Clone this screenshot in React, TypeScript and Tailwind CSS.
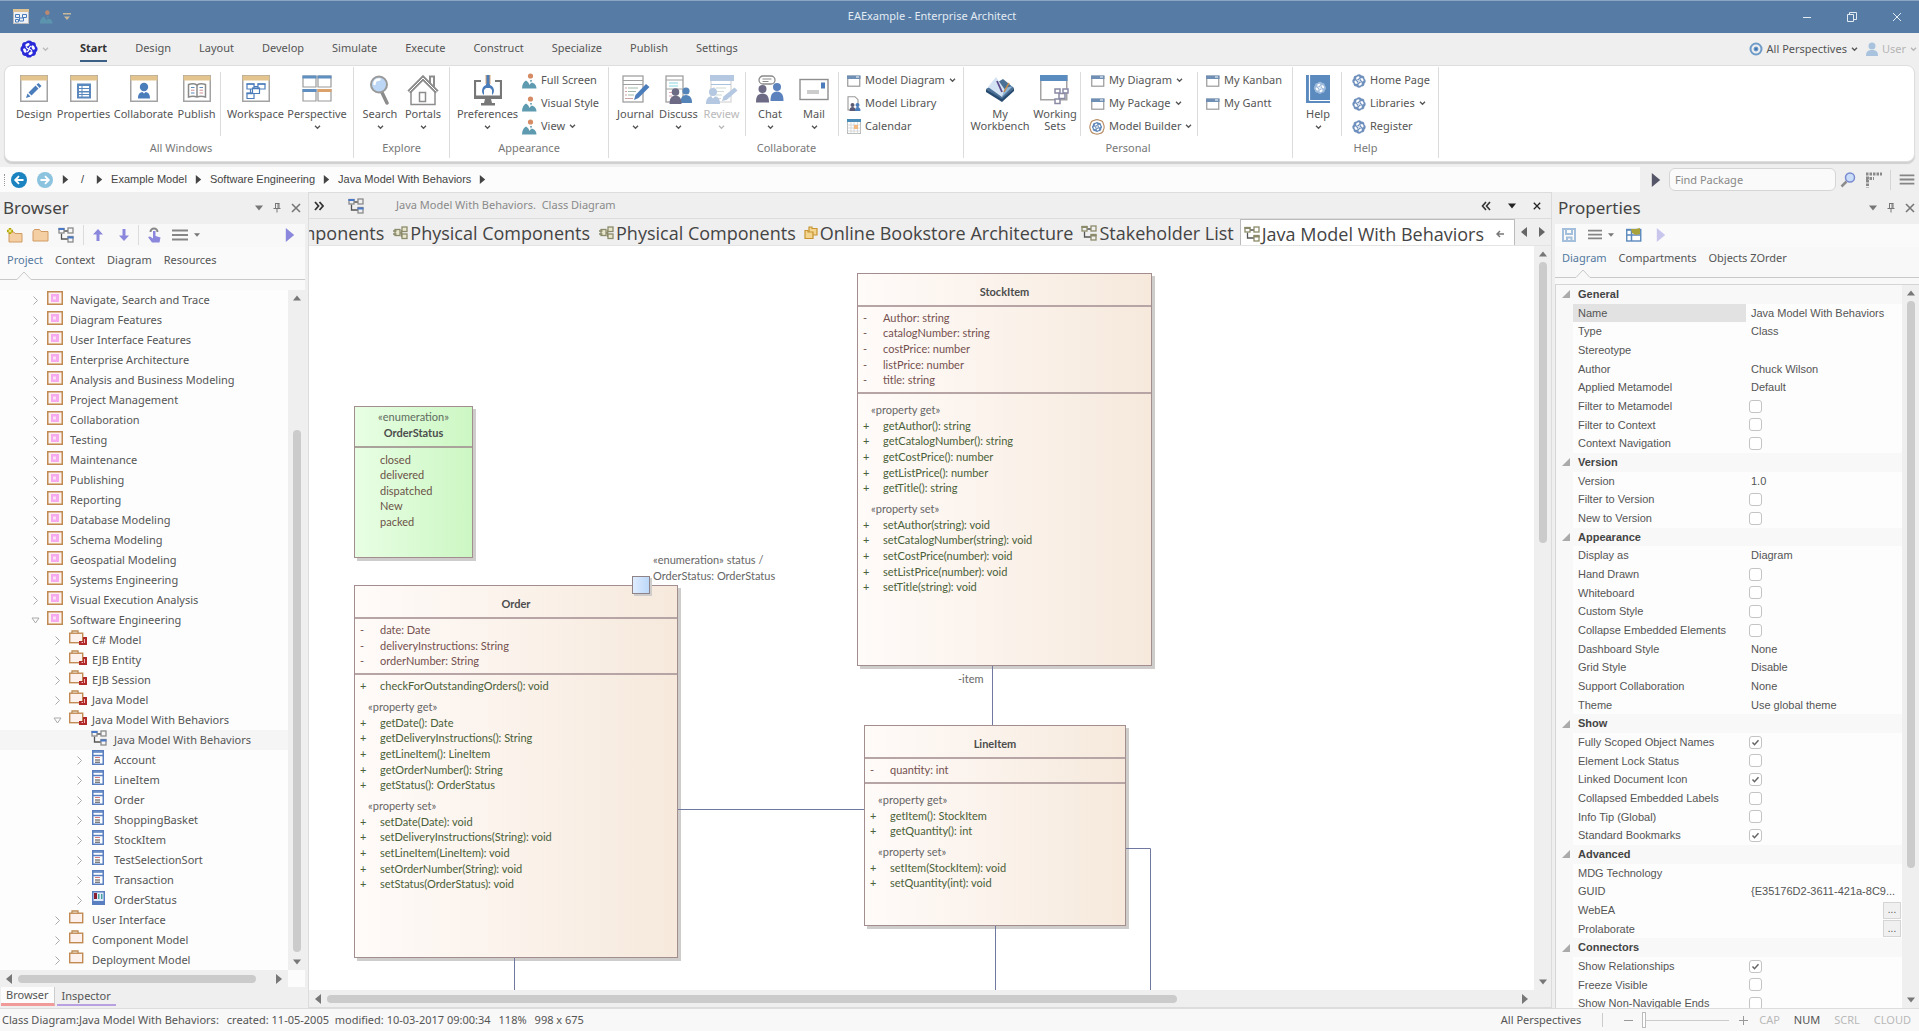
import { Fragment, type ReactNode } from 'react';
import clsx from 'clsx';

/* ---------- shared bits ---------- */

interface IconProps {
  className?: string;
}

const ChevronDown = ({ className }: IconProps) => (
  <svg viewBox="0 0 8 6" className={clsx('h-[5px] w-[7px] shrink-0', className)} fill="none" stroke="currentColor" strokeWidth="1.600">
    <path d="M1 1l3 3 3-3" />
  </svg>
);

type Direction = 'up' | 'down' | 'left' | 'right';

const trianglePaths: Record<Direction, string> = {
  up: 'M0 8l5-6 5 6z',
  down: 'M0 2l5 6 5-6z',
  left: 'M8 0L2 5l6 5z',
  right: 'M2 0l6 5-6 5z',
};

const Triangle = ({ dir, className = 'size-2' }: { dir: Direction; className?: string }) => (
  <svg viewBox="0 0 10 10" className={clsx('shrink-0', className)} fill="currentColor">
    <path d={trianglePaths[dir]} />
  </svg>
);

const MenuLines = ({ className = 'h-3 w-4' }: IconProps) => (
  <svg viewBox="0 0 16 12" className={className} stroke="#858585" strokeWidth="2">
    <path d="M0 1.5h16M0 6h16M0 10.5h16" />
  </svg>
);

const PinIcon = () => (
  <svg viewBox="0 0 10 12" className="h-3 w-2.5" fill="none" stroke="#777" strokeWidth="1">
    <path d="M3 1.500h4.500M3.500 1.500v5M6 1.500v5M7 1.500v5M1.500 6.500h7M5 6.500v4" />
  </svg>
);

const CloseIcon = ({ className = 'size-2.5 text-[#777]' }: IconProps) => (
  <svg viewBox="0 0 10 10" className={className} stroke="currentColor" strokeWidth="1.600">
    <path d="M1 1l8 8M9 1l-8 8" />
  </svg>
);

/* ---------- icons ---------- */

const quarterTurns = [0, 90, 180, 270];

const Knot = ({ color }: { color: string }) => (
  <g>
    <circle cx="8" cy="8" r="5" fill={color} />
    {quarterTurns.map((turn) => (
      <g key={turn} transform={`rotate(${turn} 8 8)`} fill={color}>
        <circle cx="8" cy="3.400" r="3" />
        <circle cx="11.200" cy="4.800" r="3" />
      </g>
    ))}
    {quarterTurns.map((turn) => (
      <g key={turn} transform={`rotate(${turn} 8 8)`}>
        <ellipse cx="6.600" cy="4.300" rx="2.100" ry="1.300" transform="rotate(-30 6.600 4.300)" fill="#fff" />
        <path d="M8 8c0-1.200.8-2 2-2.600" stroke="#fff" fill="none" />
      </g>
    ))}
  </g>
);

const KnotIcon = ({ className, color = '#6f90bd' }: IconProps & { color?: string }) => (
  <svg viewBox="0 0 16 16" className={clsx('shrink-0', className)}>
    <Knot color={color} />
  </svg>
);

const BuilderIcon = () => (
  <svg viewBox="0 0 18 18" className="-ml-0.5 h-[18px] w-4 shrink-0">
    <g fill="#fff" stroke="#b98f68" strokeWidth="1.300">
      <path d="M6 1.500c2-1 4-1 6 0 2.500.3 4 2 4.300 4.500 1 2 1 4 0 6-.3 2.500-1.800 4-4.300 4.300-2 1-4 1-6 0C3.500 16 2 14.500 1.700 12c-1-2-1-4 0-6C2 3.500 3.500 1.800 6 1.500z" />
    </g>
    <g transform="translate(3 3) scale(.75)">
      <Knot color="#5f87b8" />
    </g>
  </svg>
);

const PersonHill = ({ className = 'size-4' }: IconProps) => (
  <svg viewBox="0 0 16 16" className={clsx('shrink-0', className)}>
    <path d="M1 15.500c0-4 1.600-6.500 4-8 2 1 3 3 3.500 4.500 1-1.500 2-2.500 3.500-2 2 .8 3.500 3 3.500 5.500z" fill="#5f9bb0" />
    <circle cx="9.500" cy="3" r="2.600" fill="#d58b63" />
    <path d="M9 7h2l-1 3z" fill="#5f9bb0" />
  </svg>
);

const DiagramIcon = ({ className, color = '#8a8a8a', fill = '#4a78c8' }: IconProps & { color?: string; fill?: string }) => (
  <svg viewBox="0 0 16 16" className={clsx('size-4 shrink-0', className)} fill="none" stroke={color} strokeWidth="1.300">
    <path d="M6 4h4M3.500 6.500V12H10" stroke="#555" />
    <rect x="1" y="1.500" width="5" height="4.500" />
    <rect x="10" y="1" width="5" height="5" />
    <rect x="10" y="9.500" width="5" height="5.500" />
    <path d="M.5 2h6M9.500 10.500h6" stroke={fill} strokeWidth="2" />
  </svg>
);

const ComponentIcon = () => (
  <svg viewBox="0 0 16 14" className="h-3.5 w-4 shrink-0" fill="#e9e8cf" stroke="#8b8a6a" strokeWidth="1.300">
    <path d="M8 7h2.500M9.500 4v7" />
    <rect x="3" y="3.500" width="5" height="6" />
    <path d="M1 5h3.500M1 8h3.500" />
    <rect x="10" y="1" width="5" height="4.500" />
    <rect x="10" y="8" width="5" height="4.500" />
  </svg>
);

const PackagesIcon = () => (
  <svg viewBox="0 0 14 14" className="size-3.5 shrink-0" fill="#f3d58f" stroke="#c79431" strokeWidth="1.200">
    <path d="M5 2.500V1h3v1.500h5V9H5z" />
    <path d="M1 6V4.500h3V6h5v6.500H1z" />
  </svg>
);

const WindowFrame = ({ children }: { children: ReactNode }) => (
  <svg viewBox="0 0 28 27" className="h-[27px] w-7" fill="none">
    <rect x=".75" y=".75" width="26.500" height="25.500" fill="#fff" stroke="#a3a3a3" strokeWidth="1.500" />
    <path d="M.5.5h27v5H.5z" fill="#e3c48f" />
    {children}
  </svg>
);

const DesignIcon = () => (
  <WindowFrame>
    <path d="M6 23l1.500-4.500 3 3z" fill="#4b7dbb" />
    <path d="M8.500 17.500l7-7 3 3-7 7zM16.500 9.500l2-1.500 3 3-2 2z" fill="#4b7dbb" />
  </WindowFrame>
);

const PropertiesIcon = () => (
  <WindowFrame>
    <path d="M7 8.500h14v15H7z" fill="#5b88bd" />
    <path d="M9 11h10v5H9zM9 17.500h10v4H9z" fill="#fff" />
    <path d="M9 13.500h10M9 19.500h10M12 11v11" stroke="#5b88bd" />
  </WindowFrame>
);

const CollaborateIcon = () => (
  <WindowFrame>
    <circle cx="14" cy="12" r="4.200" fill="#4b7dbb" />
    <path d="M8 23.500c0-5 2-6 4.500-6.500l1.500 1.500 1.500-1.500c2.500.5 4.500 1.500 4.500 6.500z" fill="#4b7dbb" />
  </WindowFrame>
);

const PublishIcon = () => (
  <WindowFrame>
    <path d="M5.500 9.500c3-1 6-1 8.500.5 2.500-1.500 5.500-1.500 8.500-.5V22c-3-1-6-1-8.500 0-2.500-1-5.500-1-8.500 0z" stroke="#8a8a8a" strokeWidth="1.500" fill="#fff" />
    <path d="M14 10v12" stroke="#8a8a8a" strokeWidth="1.500" />
    <path d="M8 12.500h3.500M8 18h3.500M16.500 12.500H20" stroke="#5b88bd" />
    <path d="M8 15.200h3.500M16.500 15.200H20M16.500 18H20" stroke="#cf8f8f" />
  </WindowFrame>
);

const WorkspaceIcon = () => (
  <WindowFrame>
    <g stroke="#4b7dbb" strokeWidth="1.200" fill="#fff">
      <path d="M5 9h7v5H5zM16 9h7v5h-7zM5 18h7v5.500H5zM12 11.500h4M8.500 14v4" />
      <path d="M10.500 13h7v5.500h-7z" />
    </g>
    <path d="M4.500 9h8M15.500 9h8M10 13.500h8M4.500 18.500h6" stroke="#4b7dbb" strokeWidth="1.600" />
  </WindowFrame>
);

const PerspectiveIcon = () => (
  <svg viewBox="0 0 30 27" className="h-[27px] w-[30px]" fill="#fff" stroke="#9a9a9a" strokeWidth="1.200">
    <path d="M1 1h13v11H1zM16 1h13v11H16zM1 14.500h13V26H1zM16 14.500h13V26H16z" />
    <path d="M.5 2h14M15.500 2h14M.5 15.500h14" stroke="#5f8fc0" strokeWidth="3" />
    <path d="M15.500 15.500h14" stroke="#dba26d" strokeWidth="3" />
  </svg>
);

const SearchIcon = () => (
  <svg viewBox="0 0 22 30" className="h-[30px] w-[22px]">
    <path d="M13 17.500l5 10.500" stroke="#8c8c8c" strokeWidth="3.500" strokeLinecap="round" />
    <circle cx="10" cy="9.500" r="8" fill="#bcd6f5" stroke="#9a9a9a" strokeWidth="2" />
    <path d="M5.500 9c0-3 2-4.500 5-4.500" stroke="#fff" strokeWidth="2.500" fill="none" strokeLinecap="round" />
  </svg>
);

const PortalsIcon = () => (
  <svg viewBox="0 0 32 31" className="h-[31px] w-8" fill="none" stroke="#8d8d8d">
    <path d="M23 8V1.500h4V12" strokeWidth="2" />
    <path d="M2 17L16 3l14 14" strokeWidth="4.500" />
    <path d="M2.500 16.500L16 3l13.500 13.500" stroke="#fff" strokeWidth="1" />
    <path d="M4 17v12.500h24V17" strokeWidth="1.500" />
    <path d="M12.500 17.500h6v9h-6z" strokeWidth="1.500" />
  </svg>
);

const PreferencesIcon = () => (
  <svg viewBox="0 0 28 31" className="h-[31px] w-7" fill="none">
    <path d="M7 6H1v17h26V6h-6" stroke="#777" strokeWidth="2.200" />
    <path d="M0 20.500h28V24H0z" fill="#777" />
    <path d="M11 24h6l1 4h3v2.500H7V28h3z" fill="#777" />
    <path d="M12 0h4v10c3 1 4 3.500 4 6-.2 2-1 3-2 4v-5l-2-2h-4l-2 2v5c-1.200-1-2-2-2-4 0-2.500 1-5 4-6z" fill="#4b7dbb" />
    <path d="M12 0v9M16 0v9" stroke="#d9a878" />
  </svg>
);

const PageLines = ({ faded }: { faded?: boolean }) => (
  <g>
    <rect x="1" y="1" width="20" height="26" fill="#fff" stroke="#a0a0a0" strokeWidth="1.300" opacity={faded ? 0.4 : 1} />
    <path d="M1 5.500h20M1 9.500h20" stroke={faded ? '#a9c1de' : '#a0a0a0'} />
    <path d="M6 13h10M6 16.500h8M6 20h6" stroke="#9fb8a8" opacity={faded ? 0.5 : 1} />
    <path d="M3 13h2M3 16.500h2M3 20h2M3 23.500h8" stroke="#cfa3a3" opacity={faded ? 0.5 : 1} />
  </g>
);

const JournalIcon = () => (
  <svg viewBox="0 0 28 28" className="size-7">
    <PageLines />
    <path d="M12 25l1.500-5L24 9l3.500 3-11 11z" fill="#4b7dbb" />
  </svg>
);

const People = ({ left, right }: { left: string; right: string }) => (
  <g>
    <circle cx="21" cy="16" r="3.600" fill={right} />
    <path d="M15.500 28c0-6 2-7.500 5.500-8 4 .5 6 2.500 6 8z" fill={right} />
    <circle cx="10.500" cy="17" r="3.800" fill={left} />
    <path d="M4.500 29c0-6 2-8 6-8.500 4 .5 6 2.500 6 8.500z" fill={left} />
  </g>
);

const DiscussIcon = () => (
  <svg viewBox="0 0 28 30" className="h-[30px] w-7">
    <rect x="1" y="1" width="17" height="26" fill="#fff" stroke="#a0a0a0" strokeWidth="1.300" />
    <path d="M1 5h17M1 14h17" stroke="#a0a0a0" />
    <path d="M4 8h9M4 11h9" stroke="#86d5e0" />
    <path d="M4 17.500h3M4 21h3" stroke="#e3a5b5" />
    <People left="#6d6a85" right="#5585b8" />
  </svg>
);

const ReviewIcon = () => (
  <svg viewBox="0 0 32 30" className="h-[30px] w-8">
    <g transform="translate(4 0)">
      <PageLines faded />
      <path d="M0 0h24v6H0z" fill="#b4c8e2" />
    </g>
    <circle cx="7" cy="17" r="4" fill="#b4c8e2" />
    <path d="M0 29c0-6 3-7.500 5-7.500l2 2 2-2c3 0 5 2 5 7.500z" fill="#b4c8e2" />
    <path d="M16 26l1.500-4.500 11-9 3 3-11 9.500z" fill="#b4c8e2" />
  </svg>
);

const ChatIcon = () => (
  <svg viewBox="0 0 28 28" className="size-7">
    <rect x="3" y="1" width="16" height="8" rx="4" fill="#fff" stroke="#8a8a8a" strokeWidth="1.300" />
    <path d="M6.500 4h9M6.500 6.500h6" stroke="#8a8a8a" />
    <circle cx="21" cy="12" r="4" fill="#5b82bd" />
    <path d="M14.500 26c0-7 2-9 6.500-9.500 4.500.5 6.500 3 6.500 9.500z" fill="#5b82bd" />
    <circle cx="6.500" cy="14" r="4" fill="#6d6a85" />
    <path d="M0 27.500c0-7 2-8.500 6.500-9 4.500.5 6.500 2.500 6.500 9z" fill="#6d6a85" />
  </svg>
);

const MailIcon = () => (
  <svg viewBox="0 0 30 28" className="h-7 w-[30px]">
    <rect x="1" y="4.500" width="28" height="20" fill="#fff" stroke="#8f8f8f" strokeWidth="1.400" />
    <path d="M22 7.500h4v6h-4z" fill="#4b7dbb" />
    <path d="M8 16h12M8 18h12" stroke="#9a9a9a" strokeWidth="1.200" />
  </svg>
);

const WorkbenchIcon = () => (
  <svg viewBox="0 0 30 28" className="h-7 w-[30px]">
    <path d="M1 14l17-10 11 9-12 12z" fill="#4a7096" />
    <path d="M1 14v3l16 10v-3zM29 13v3L17 27v-3z" fill="#274b70" />
    <path d="M3 12l8-10 9 13-3 7z" fill="#d4e3f3" />
    <path d="M17 22l3-9 8-2z" fill="#8fb5d8" />
    <path d="M12 6l5 11" stroke="#5b4a8a" strokeWidth="1.800" />
    <path d="M19 17l5-9" stroke="#c98f4a" strokeWidth="1.500" />
  </svg>
);

const WorkingSetsIcon = () => (
  <svg viewBox="0 0 30 30" className="h-[30px] w-[30px]" fill="#fff">
    <rect x=".75" y=".75" width="26" height="24" stroke="#a3a3a3" strokeWidth="1.500" />
    <path d="M0 0h27.500v6H0z" fill="#5b8cc0" />
    <g stroke="#8a8aa5" strokeWidth="1.500">
      <path d="M15 14h5v4h-5zM23 14h5v4h-5zM15 24h5v4.500h-5z" />
      <path d="M19 18.500h6v5h-6z" />
    </g>
  </svg>
);

const HelpBookIcon = () => (
  <svg viewBox="0 0 24 29" className="h-[29px] w-6">
    <path d="M0 0h24v28H0z" fill="#5b8abf" />
    <path d="M3.500 0v25.500M3.500 25.500H24" stroke="#fff" strokeWidth="1.200" />
    <g transform="translate(7.500 6.500) scale(.8)">
      <Knot color="#9dbbdd" />
    </g>
  </svg>
);

const SmallWindowIcon = () => (
  <svg viewBox="0 0 14 12" className="h-3 w-3.5 shrink-0">
    <rect x=".75" y="1.200" width="12" height="10" fill="#fff" stroke="#999" strokeWidth="1.200" />
    <path d="M0 .5h13.500V4H0z" fill="#6f8fb5" />
    <path d="M9 2h3" stroke="#fff" />
  </svg>
);

const LibraryIcon = () => (
  <svg viewBox="0 0 14 16" className="h-4 w-3.5 shrink-0">
    <path d="M1 .7h7l3 3V14H1z" fill="#fff" stroke="#999" strokeWidth="1.100" />
    <circle cx="5.500" cy="9" r="2" fill="#5b5a75" />
    <path d="M2.500 15c0-3 1-4 3-4s3 1 3 4z" fill="#5b5a75" />
    <circle cx="10.500" cy="9" r="2" fill="#4b7dbb" />
    <path d="M8 15c0-3 1-4 2.500-4s3 1 3 4z" fill="#4b7dbb" />
  </svg>
);

const CalendarIcon = () => (
  <svg viewBox="0 0 14 15" className="h-[15px] w-3.5 shrink-0">
    <rect x=".5" y=".5" width="13" height="14" fill="#fff" stroke="#bbb" />
    <path d="M0 0h14v3H0z" fill="#4b8bb8" />
    <path d="M0 6h14M0 9h14M0 12h14M4 3v12M7 3v12M10.500 3v12" stroke="#ccc" strokeWidth=".7" />
    <path d="M7 6h4v4H7z" fill="#f2b880" />
  </svg>
);

/* ---------- title bar and ribbon ---------- */

const TitleBar = () => (
  <header className="flex h-[33px] shrink-0 items-center border-t border-[#8aa6c4] bg-[#567ca5] pb-px text-[#e3ebf3]">
    <div className="flex items-center gap-2.5 pl-[13px]">
      <svg viewBox="0 0 16 15" className="h-[15px] w-4">
        <rect x=".5" y=".5" width="15" height="14" fill="#eef1f5" stroke="#bbb" />
        <path d="M0 0h16v3H0z" fill="#dcc295" />
        <path d="M2.500 5.500h4v3h-4zM9.500 5.500h4v3h-4zM2.500 10.500h3v2.500h-3zM6.500 9h4v3h-4z" fill="none" stroke="#4b7dbb" />
      </svg>
      <PersonHill className="size-3.5 opacity-80" />
      <svg viewBox="0 0 8 8" className="size-2" fill="#c9b79a">
        <path d="M0 0h8v1.500H0zM1 3.500h6L4 7z" />
      </svg>
    </div>
    <h1 className="flex-1 pr-2 text-center text-[11px]">EAExample - Enterprise Architect</h1>
    <div className="flex justify-end gap-[33px] pr-4">
      <button aria-label="Minimize">
        <svg viewBox="0 0 12 12" className="size-3" stroke="currentColor"><path d="M2 6.500h8" /></svg>
      </button>
      <button aria-label="Restore">
        <svg viewBox="0 0 12 12" className="size-3" fill="none" stroke="currentColor"><path d="M1.500 3.500h6v7h-6zM3.500 3.500v-2h7v7h-3" /></svg>
      </button>
      <button aria-label="Close">
        <svg viewBox="0 0 12 12" className="size-3" stroke="currentColor"><path d="M2 2l8 8M10 2l-8 8" /></svg>
      </button>
    </div>
  </header>
);

const menuTabs = ['Start', 'Design', 'Layout', 'Develop', 'Simulate', 'Execute', 'Construct', 'Specialize', 'Publish', 'Settings'];

const MenuBar = () => (
  <nav className="flex h-8 shrink-0 items-center justify-between bg-[#efefef] text-[11px] text-[#555]">
    <div className="flex h-full items-center">
      <button className="ml-5 flex w-[60px] items-center gap-1" aria-label="Application menu">
        <KnotIcon className="size-[18px]" color="#2a2ad8" />
        <ChevronDown className="text-[#bbb]" />
      </button>
      <div className="flex h-full gap-7">
        {menuTabs.map((tab) => (
          <button
            key={tab}
            className={clsx('mb-[3px] border-b-2 pt-1', tab === 'Start' ? 'border-[#3c5f86] font-bold text-[#333]' : 'border-transparent')}
          >
            {tab}
          </button>
        ))}
      </div>
    </div>
    <div className="flex items-center gap-2 pr-0.5">
      <button className="flex items-center gap-1">
        <svg viewBox="0 0 14 14" className="size-3.5" fill="none" stroke="#6e9bc8">
          <circle cx="7" cy="7" r="5.500" strokeWidth="2" />
          <circle cx="7" cy="7" r="2" fill="#3f78b8" />
        </svg>
        All Perspectives
        <ChevronDown />
      </button>
      <button className="flex items-center gap-1 text-[#b5b5b5]" disabled>
        <svg viewBox="0 0 12 14" className="h-3.5 w-3" fill="#a9c3de">
          <circle cx="6" cy="4" r="3.500" />
          <path d="M0 14c0-4 1.500-6 6-6s6 2 6 6z" />
        </svg>
        User
        <ChevronDown />
      </button>
    </div>
  </nav>
);

interface BigButtonProps {
  icon: ReactNode;
  label: string;
  width: string;
  menu?: boolean;
  disabled?: boolean;
}

const BigButton = ({ icon, label, width, menu, disabled }: BigButtonProps) => (
  <button
    className={clsx('flex shrink-0 flex-col items-center pt-2', width, disabled ? 'text-[#b9b9b9]' : 'text-[#555]')}
    disabled={disabled}
  >
    <span className="flex h-[33px] items-start">{icon}</span>
    <span className="text-[11px] leading-3">{label}</span>
    {menu && <ChevronDown className="mt-[5px]" />}
  </button>
);

interface SmallItem {
  icon: ReactNode;
  label: string;
  menu?: boolean;
}

const SmallList = ({ items, className }: { items: SmallItem[]; className?: string }) => (
  <div className={clsx('flex flex-col pt-0.5', className)}>
    {items.map((item) => (
      <button key={item.label} className="flex h-[23px] items-center gap-1 text-[11px] whitespace-nowrap">
        {item.icon}
        {item.label}
        {item.menu && <ChevronDown />}
      </button>
    ))}
  </div>
);

const Separator = () => <div className="mx-0.5 mt-[5px] h-16 w-px shrink-0 bg-[#dcdcdc]" />;

const RibbonGroup = ({ title, className, children }: { title: string; className: string; children: ReactNode }) => (
  <section className={clsx('mt-px flex h-[91px] shrink-0 flex-col border-r border-[#dcdcdc]', className)}>
    <div className="flex h-[73px] items-start">{children}</div>
    <h2 className="pr-1 text-center text-[11px] leading-4 text-[#777]">{title}</h2>
  </section>
);

const smallKnot = <KnotIcon className="size-3.5" />;

const Ribbon = () => (
  <div className="shrink-0 bg-[#efefef] px-1 pb-[5px]">
    <div className="flex h-[97px] overflow-hidden rounded-lg border border-[#dedede] bg-white text-[#555] shadow-[0_2px_1px_#cfcfcf]">
      <RibbonGroup title="All Windows" className="w-[349px] pl-2">
        <BigButton icon={<DesignIcon />} label="Design" width="w-[42px]" />
        <BigButton icon={<PropertiesIcon />} label="Properties" width="w-[57px]" />
        <BigButton icon={<CollaborateIcon />} label="Collaborate" width="w-[63px]" />
        <BigButton icon={<PublishIcon />} label="Publish" width="w-[43px]" />
        <Separator />
        <BigButton icon={<WorkspaceIcon />} label="Workspace" width="w-[65px]" />
        <BigButton icon={<PerspectiveIcon />} label="Perspective" width="w-[58px]" menu />
      </RibbonGroup>
      <RibbonGroup title="Explore" className="w-24 pl-1">
        <BigButton icon={<SearchIcon />} label="Search" width="w-11" menu />
        <BigButton icon={<PortalsIcon />} label="Portals" width="w-[42px]" menu />
      </RibbonGroup>
      <RibbonGroup title="Appearance" className="w-[159px] pl-1">
        <BigButton icon={<PreferencesIcon />} label="Preferences" width="w-[67px]" menu />
        <SmallList
          items={[
            { icon: <PersonHill />, label: 'Full Screen' },
            { icon: <PersonHill />, label: 'Visual Style' },
            { icon: <PersonHill />, label: 'View', menu: true },
          ]}
        />
      </RibbonGroup>
      <RibbonGroup title="Collaborate" className="w-[355px] pl-[5px]">
        <BigButton icon={<JournalIcon />} label="Journal" width="w-[43px]" menu />
        <BigButton icon={<DiscussIcon />} label="Discuss" width="w-[43px]" menu />
        <BigButton icon={<ReviewIcon />} label="Review" width="w-[43px]" menu disabled />
        <Separator />
        <BigButton icon={<ChatIcon />} label="Chat" width="w-11" menu />
        <BigButton icon={<MailIcon />} label="Mail" width="w-11" menu />
        <Separator />
        <SmallList
          className="ml-1.5"
          items={[
            { icon: <SmallWindowIcon />, label: 'Model Diagram', menu: true },
            { icon: <LibraryIcon />, label: 'Model Library' },
            { icon: <CalendarIcon />, label: 'Calendar' },
          ]}
        />
      </RibbonGroup>
      <RibbonGroup title="Personal" className="w-[329px] pl-1">
        <BigButton icon={<WorkbenchIcon />} label="My Workbench" width="w-[64px]" />
        <BigButton icon={<WorkingSetsIcon />} label="Working Sets" width="w-[46px]" />
        <Separator />
        <SmallList
          className="ml-2 w-[104px]"
          items={[
            { icon: <SmallWindowIcon />, label: 'My Diagram', menu: true },
            { icon: <SmallWindowIcon />, label: 'My Package', menu: true },
            { icon: <BuilderIcon />, label: 'Model Builder', menu: true },
          ]}
        />
        <Separator />
        <SmallList
          className="ml-1.5"
          items={[
            { icon: <SmallWindowIcon />, label: 'My Kanban' },
            { icon: <SmallWindowIcon />, label: 'My Gantt' },
          ]}
        />
      </RibbonGroup>
      <RibbonGroup title="Help" className="w-[146px] pl-1">
        <BigButton icon={<HelpBookIcon />} label="Help" width="w-[42px]" menu />
        <Separator />
        <SmallList
          className="ml-2"
          items={[
            { icon: smallKnot, label: 'Home Page' },
            { icon: smallKnot, label: 'Libraries', menu: true },
            { icon: smallKnot, label: 'Register' },
          ]}
        />
      </RibbonGroup>
    </div>
  </div>
);

/* ---------- breadcrumb ---------- */

const crumbs = ['/', 'Example Model', 'Software Engineering', 'Java Model With Behaviors'];

const CircleArrow = ({ color, flip }: { color: string; flip?: boolean }) => (
  <svg viewBox="0 0 16 16" className={clsx('size-4', flip && 'rotate-180')}>
    <circle cx="8" cy="8" r="8" fill={color} />
    <path d="M12.500 8h-8M8 4.200L4.200 8 8 11.800" fill="none" stroke="#fff" strokeWidth="1.800" />
  </svg>
);

const Breadcrumb = () => (
  <div className="flex h-[25px] shrink-0 items-center bg-[#efefef] font-['Liberation_Sans',sans-serif] text-[11px] text-[#444]">
    <div className="flex h-full flex-1 items-center bg-[#fcfcfc]">
      <span className="ml-1 h-3 border-l border-dotted border-[#999]" />
      <button className="ml-1.5" aria-label="Back"><CircleArrow color="#1b84c0" /></button>
      <button className="ml-2.5" aria-label="Forward"><CircleArrow color="#8cc3de" flip /></button>
      <Triangle dir="right" className="ml-2 size-[9px]" />
      {crumbs.map((crumb) => (
        <Fragment key={crumb}>
          <a href="#" className={crumb === '/' ? 'mx-[11px]' : 'mx-[7px]'}>{crumb}</a>
          <Triangle dir="right" className="size-[9px]" />
        </Fragment>
      ))}
    </div>
    <button className="mr-1.5 ml-[9px] text-[#555568]" aria-label="Go"><Triangle dir="right" className="size-3.5" /></button>
    <input
      aria-label="Find Package"
      placeholder="Find Package"
      className="h-[23px] w-[167px] rounded-md border border-[#d5d5d5] bg-[#fafafa] px-[5px] font-['Noto_Sans',sans-serif] text-[11px] placeholder:text-[#888]"
    />
    <button className="ml-1" aria-label="Find">
      <svg viewBox="0 0 16 16" className="size-4">
        <path d="M6.500 9.500L1.500 14.500" stroke="#8c8c8c" strokeWidth="2.500" />
        <circle cx="10" cy="5.500" r="4.500" fill="#c9dcf8" stroke="#7a8bd0" strokeWidth="1.500" />
      </svg>
    </button>
    <button className="ml-2.5" aria-label="Layout">
      <svg viewBox="0 0 16 16" className="size-4" stroke="#8a8a8a" strokeWidth="3" strokeDasharray="2.500 1">
        <path d="M0 2h16M1.500 4.500v11M0 6.500h8" />
      </svg>
    </button>
    <div className="mx-2 h-5 w-px bg-[#d5d5d5]" />
    <button className="mr-1" aria-label="Options"><MenuLines className="h-[11px] w-4" /></button>
  </div>
);

/* ---------- scroll bars ---------- */

const VerticalScroll = ({ thumb }: { thumb: string }) => (
  <div className="flex w-[17px] shrink-0 flex-col items-center justify-between bg-[#efefef] py-1 text-[#777]">
    <Triangle dir="up" />
    <div className="w-2 flex-1 py-1">
      <div className={clsx('w-2 rounded-full bg-[#cbcbcb]', thumb)} />
    </div>
    <Triangle dir="down" />
  </div>
);

const HorizontalScroll = ({ thumb }: { thumb: string }) => (
  <div className="flex h-[17px] min-w-0 flex-1 items-center bg-[#efefef] px-1 text-[#777]">
    <Triangle dir="left" className="size-2.5" />
    <div className="h-2 flex-1 px-1">
      <div className={clsx('h-2 rounded-full bg-[#cbcbcb]', thumb)} />
    </div>
    <Triangle dir="right" className="size-2.5" />
  </div>
);

/* ---------- browser panel ---------- */

const PanelHeader = ({ title }: { title: string }) => (
  <div className="flex h-8 shrink-0 items-center justify-between bg-[#efefef] pr-1 pl-[3px]">
    <h2 className="text-[17px] text-[#444]">{title}</h2>
    <div className="flex items-center gap-[9px] text-[#777]">
      <button aria-label={`${title} menu`}><Triangle dir="down" /></button>
      <button aria-label={`Pin ${title}`}><PinIcon /></button>
      <button aria-label={`Close ${title}`}><CloseIcon /></button>
    </div>
  </div>
);

const PanelTabs = ({ tabs, notch }: { tabs: string[]; notch: string }) => (
  <div className="shrink-0">
    <div className="flex h-[22px] items-center gap-3 px-[7px] text-[11px] text-[#555]">
      {tabs.map((tab, i) => (
        <button key={tab} className={i === 0 ? 'text-[#53789f]' : undefined}>{tab}</button>
      ))}
    </div>
    <div className="flex items-end">
      <div className={clsx('h-px bg-[#c9c9c9]', notch)} />
      <svg viewBox="0 0 14 9" className="h-[9px] w-3.5" fill="none" stroke="#c9c9c9">
        <path d="M0 8.500L7 1l7 7.500" />
      </svg>
      <div className="h-px flex-1 bg-[#c9c9c9]" />
    </div>
  </div>
);

type NodeKind = 'model' | 'ns' | 'package' | 'diagram' | 'class' | 'enum';

interface TreeItem {
  label: string;
  kind: NodeKind;
  open?: boolean;
}

const topModels = [
  'Navigate, Search and Trace',
  'Diagram Features',
  'User Interface Features',
  'Enterprise Architecture',
  'Analysis and Business Modeling',
  'Project Management',
  'Collaboration',
  'Testing',
  'Maintenance',
  'Publishing',
  'Reporting',
  'Database Modeling',
  'Schema Modeling',
  'Geospatial Modeling',
  'Systems Engineering',
  'Visual Execution Analysis',
];

const classNames = ['Account', 'LineItem', 'Order', 'ShoppingBasket', 'StockItem', 'TestSelectionSort', 'Transaction'];

const treeItems: TreeItem[] = [
  ...topModels.map((label): TreeItem => ({ label, kind: 'model' })),
  { label: 'Software Engineering', kind: 'model', open: true },
  { label: 'C# Model', kind: 'ns' },
  { label: 'EJB Entity', kind: 'ns' },
  { label: 'EJB Session', kind: 'ns' },
  { label: 'Java Model', kind: 'ns' },
  { label: 'Java Model With Behaviors', kind: 'ns', open: true },
  { label: 'Java Model With Behaviors', kind: 'diagram' },
  ...classNames.map((label): TreeItem => ({ label, kind: 'class' })),
  { label: 'OrderStatus', kind: 'enum' },
  { label: 'User Interface', kind: 'package' },
  { label: 'Component Model', kind: 'package' },
  { label: 'Deployment Model', kind: 'package' },
];

const indents: Record<NodeKind, string> = {
  model: 'pl-[29px]',
  ns: 'pl-[51px]',
  package: 'pl-[51px]',
  diagram: 'pl-[73px]',
  class: 'pl-[73px]',
  enum: 'pl-[73px]',
};

const TreeIcon = ({ kind }: { kind: NodeKind }) => {
  if (kind === 'model') {
    return (
      <svg viewBox="0 0 16 14" className="h-3.5 w-4">
        <rect x=".75" y=".75" width="14.500" height="12.500" fill="#fdf1ee" stroke="#c08a52" strokeWidth="1.500" />
        <rect x="4" y="3" width="8" height="8" fill="#f5a9ee" />
        <path d="M6 5.500h3v3H6z" fill="#fbe3f3" />
      </svg>
    );
  }
  if (kind === 'ns' || kind === 'package') {
    return (
      <svg viewBox="0 0 19 15" className="h-[15px] w-[19px]">
        <path d="M3 3.500V1h6v2.500" fill="none" stroke="#c08a52" strokeWidth="1.300" />
        <rect x=".7" y="3.200" width="13" height="9.500" fill="#fdf1ee" stroke="#c08a52" strokeWidth="1.400" />
        {kind === 'ns' && <path d="M14 7h4v8h-8v-4h4z" fill="#b02a2a" />}
        {kind === 'ns' && <path d="M12.500 12.500h1.500M15.500 9v4" stroke="#f0b8b8" />}
      </svg>
    );
  }
  if (kind === 'diagram') return <DiagramIcon />;
  if (kind === 'class') {
    return (
      <svg viewBox="0 0 12 15" className="ml-px h-[15px] w-3" fill="none">
        <rect x=".75" y=".75" width="10.500" height="13.500" fill="#fff" stroke="#5a7fc0" strokeWidth="1.500" />
        <path d="M0 2h12M0 5.500h12" stroke="#5a7fc0" strokeWidth="1.500" />
        <path d="M3 7.500h5" stroke="#d77" />
        <path d="M3 10h5M3 12.200h5" stroke="#444" />
      </svg>
    );
  }
  return (
    <svg viewBox="0 0 13 14" className="ml-px h-3.5 w-[13px]">
      <rect x=".75" y=".75" width="11.500" height="12.500" fill="#dfeaf8" stroke="#5a7fc0" strokeWidth="1.500" />
      <path d="M2 2h3v6H2z" fill="#8a1f2f" />
      <path d="M6 3h1.500v5H6zM9 3h1.500v5H9z" fill="#4aa3a3" />
      <path d="M1 10h11v3H1z" fill="#5a7fc0" />
    </svg>
  );
};

const TreeRow = ({ item }: { item: TreeItem }) => (
  <li
    className={clsx(
      'flex h-5 items-center text-[11px] whitespace-nowrap',
      indents[item.kind],
      item.kind === 'diagram' && 'bg-[#f5f5f5]',
    )}
  >
    <span className="flex w-[18px] justify-center pr-1.5 text-[#aaa]">
      {item.kind !== 'diagram' &&
        (item.open ? (
          <svg viewBox="0 0 9 7" className="h-[7px] w-[9px] shrink-0" fill="none" stroke="currentColor"><path d="M1 1h7L4.500 6z" /></svg>
        ) : (
          <svg viewBox="0 0 5 9" className="h-[9px] w-[5px] shrink-0" fill="none" stroke="currentColor"><path d="M.5.5l4 4-4 4" /></svg>
        ))}
    </span>
    <span className="flex w-[23px] shrink-0 pb-[5px]">
      <TreeIcon kind={item.kind} />
    </span>
    {item.label}
  </li>
);

const BrowserToolbar = () => (
  <div className="flex h-[23px] shrink-0 items-center gap-[9px] bg-[#f8f8f8] pr-2 pb-0.5 pl-1.5">
    <button aria-label="New package">
      <svg viewBox="0 0 17 16" className="h-4 w-[17px]">
        <path d="M3 5h5l1 1.500h7V15H3z" fill="#f4cfa4" stroke="#d09a62" />
        <path d="M4 1v6M1 4h6" stroke="#b3a600" strokeWidth="2.500" />
        <path d="M4 2.500v3M2.500 4h3" stroke="#fffbb0" />
      </svg>
    </button>
    <button aria-label="Open package">
      <svg viewBox="0 0 17 16" className="h-4 w-[17px]">
        <path d="M1 4.500L2.500 2.500h5L9 4.500h7V14H1z" fill="#f4cfa4" stroke="#d09a62" />
      </svg>
    </button>
    <button aria-label="New diagram"><DiagramIcon /></button>
    <div className="h-5 w-px bg-[#dcdcdc]" />
    <button aria-label="Move up">
      <svg viewBox="0 0 10 12" className="h-3 w-2.5" fill="#8a87dd"><path d="M5 0l5 5.500H6.500V12h-3V5.500H0z" /></svg>
    </button>
    <button aria-label="Move down" className="ml-[7px]">
      <svg viewBox="0 0 10 12" className="h-3 w-2.5" fill="#8a87dd"><path d="M5 12l5-5.500H6.500V0h-3v6.500H0z" /></svg>
    </button>
    <div className="h-5 w-px bg-[#dcdcdc]" />
    <button aria-label="Focus">
      <svg viewBox="0 0 13 16" className="h-4 w-[13px]">
        <path d="M2.500 5a3.500 3.500 0 117 0" fill="none" stroke="#888" strokeWidth="2" />
        <path d="M5 4h2.500v5l5 1.500-1 5H4L0 10l2-.5 3 2z" fill="#8a87dd" />
      </svg>
    </button>
    <button aria-label="Options" className="ml-0.5 flex items-center gap-1.5 text-[#777]">
      <MenuLines /> <Triangle dir="down" className="size-1.5" />
    </button>
    <button aria-label="Run" className="ml-auto text-[#8a87dd]">
      <Triangle dir="right" className="size-3.5" />
    </button>
  </div>
);

const BrowserPanel = () => (
  <aside className="flex w-[305px] shrink-0 flex-col bg-[#fafafa]">
    <PanelHeader title="Browser" />
    <BrowserToolbar />
    <div className="pt-0.5 pb-2.5">
      <PanelTabs tabs={['Project', 'Context', 'Diagram', 'Resources']} notch="w-[17px]" />
    </div>
    <div className="flex min-h-0 flex-1 bg-[#fdfdfd]">
      <ul className="min-w-0 flex-1 overflow-hidden text-[#555]">
        {treeItems.map((item, i) => (
          <TreeRow key={i} item={item} />
        ))}
      </ul>
      <VerticalScroll thumb="mt-[124px] h-[522px]" />
    </div>
    <div className="flex bg-[#fcfcfc] pr-[17px]">
      <HorizontalScroll thumb="w-[238px]" />
    </div>
    <div className="flex h-[21px] shrink-0 gap-0.5 bg-[#efefef] px-px pb-0.5 text-[11px] leading-4 text-[#555]">
      <button className="border-r border-b-[3px] border-r-[#ccc] border-b-[#f09a9a] bg-[#fcfcfc] px-[5px]">Browser</button>
      <button className="border-b-2 border-[#b9a0e0] px-[5px]">Inspector</button>
    </div>
  </aside>
);

/* ---------- diagram area ---------- */

const documentTabs = [
  { label: 'Physical Components', icon: <ComponentIcon /> },
  { label: 'Physical Components', icon: <ComponentIcon /> },
  { label: 'Online Bookstore Architecture', icon: <PackagesIcon /> },
  { label: 'Stakeholder List', icon: <DiagramIcon color="#8b8a6a" fill="#8b8a6a" /> },
];

const DocumentTabs = () => (
  <div className="flex h-[27px] shrink-0 items-center overflow-hidden border-b border-[#e4e4e4] bg-[#efefef] font-['Open_Sans',sans-serif] text-[18px] leading-6 whitespace-nowrap text-[#444]">
    {/* leading tabs are scrolled off to the left, so the strip is anchored at its right end */}
    <div className="flex min-w-0 flex-1 justify-end gap-2 overflow-hidden pt-0.5 pr-1.5">
      <button className="shrink-0">mponents</button>
      {documentTabs.map((tab, i) => (
        <button key={i} className="flex shrink-0 items-center gap-0.5">
          {tab.icon}
          {tab.label}
        </button>
      ))}
    </div>
    <div className="flex h-full shrink-0 items-center gap-0.5 border border-b-0 border-[#bbb] bg-white pt-0.5 pr-2.5 pl-[3px]">
      <DiagramIcon color="#8b8a6a" fill="#8b8a6a" />
      Java Model With Behaviors
      <svg viewBox="0 0 8 8" className="ml-2.5 size-2" fill="none" stroke="#777" strokeWidth="1.500"><path d="M8 4H1M4 1L1 4l3 3" /></svg>
    </div>
    <div className="flex gap-2 px-1 text-[#666]">
      <button aria-label="Previous tab"><Triangle dir="left" className="size-2.5" /></button>
      <button aria-label="Next tab"><Triangle dir="right" className="size-2.5" /></button>
    </div>
  </div>
);

interface OperationGroup {
  stereotype?: string;
  items: string[];
}

interface ClassNodeProps {
  name: string;
  place: string;
  attributes: string[];
  operations: OperationGroup[];
}

// rows share out a block's height so that text keeps the zoomed line pitch
const blockHeights: Record<number, string> = {
  0: 'h-0',
  1: 'h-4',
  3: 'h-[47px]',
  5: 'h-[78px]',
  6: 'h-[94px]',
};

const Member = ({ sign, text }: { sign: string; text: string }) => (
  <li className="flex min-h-0 flex-1 items-center">
    <span className="w-5">{sign}</span>
    {text}
  </li>
);

const ClassNode = ({ name, place, attributes, operations }: ClassNodeProps) => (
  <article
    className={clsx(
      'absolute border border-[#a28e8f] bg-gradient-to-r from-[#fffbf9] to-[#f6e9dc] text-[11px] leading-4 shadow-[3px_3px_0_#cfcccc]',
      place,
    )}
  >
    <h3 className="flex h-[33px] items-center justify-center border-b-2 border-[#b7a4a4] pt-1 font-bold text-[#4d4d4d]">{name}</h3>
    <div className="border-b-2 border-[#b7a4a4] px-[5px] pt-[3px] pb-1 text-[#74504f]">
      <ul className={clsx('flex flex-col', blockHeights[attributes.length])}>
        {attributes.map((text) => (
          <Member key={text} sign="-" text={text} />
        ))}
      </ul>
    </div>
    <div className="flex flex-col gap-[5px] px-[5px] pt-[3px] text-[#4a6038]">
      {operations.map((group, i) => (
        <ul key={i} className={clsx('flex flex-col', blockHeights[group.items.length + (group.stereotype ? 1 : 0)])}>
          {group.stereotype && <li className="flex min-h-0 flex-1 items-center pl-2 text-[#666]">«{group.stereotype}»</li>}
          {group.items.map((text) => (
            <Member key={text} sign="+" text={text} />
          ))}
        </ul>
      ))}
    </div>
  </article>
);

const Canvas = () => (
  <div className="relative min-w-0 flex-1 overflow-hidden bg-white font-['Lato',sans-serif]">
    <article className="absolute top-40 left-[45px] h-[152px] w-[119px] border border-[#a28e8f] bg-gradient-to-r from-[#e8fee4] to-[#ccf7c3] text-[11px] shadow-[3px_3px_0_#cfcccc]">
      <header className="flex h-[41px] flex-col items-center border-b-2 border-[#a9a39b] pt-0.5 leading-4 text-[#5f6b5f]">
        <span>«enumeration»</span>
        <h3 className="font-bold text-[#4d4d4d]">OrderStatus</h3>
      </header>
      <ul className="flex h-[82px] flex-col pt-1 pl-[25px] text-[#6b5248]">
        {['closed', 'delivered', 'dispatched', 'New', 'packed'].map((literal) => (
          <li key={literal} className="flex min-h-0 flex-1 items-center">{literal}</li>
        ))}
      </ul>
    </article>

    <ClassNode
      name="Order"
      place="left-[45px] top-[339px] h-[373px] w-[324px]"
      attributes={['date: Date', 'deliveryInstructions: String', 'orderNumber: String']}
      operations={[
        { items: ['checkForOutstandingOrders(): void'] },
        {
          stereotype: 'property get',
          items: ['getDate(): Date', 'getDeliveryInstructions(): String', 'getLineItem(): LineItem', 'getOrderNumber(): String', 'getStatus(): OrderStatus'],
        },
        {
          stereotype: 'property set',
          items: ['setDate(Date): void', 'setDeliveryInstructions(String): void', 'setLineItem(LineItem): void', 'setOrderNumber(String): void', 'setStatus(OrderStatus): void'],
        },
      ]}
    />
    <ClassNode
      name="StockItem"
      place="left-[548px] top-[27px] h-[393px] w-[295px]"
      attributes={['Author: string', 'catalogNumber: string', 'costPrice: number', 'listPrice: number', 'title: string']}
      operations={[
        { items: [] },
        {
          stereotype: 'property get',
          items: ['getAuthor(): string', 'getCatalogNumber(): string', 'getCostPrice(): number', 'getListPrice(): number', 'getTitle(): string'],
        },
        {
          stereotype: 'property set',
          items: ['setAuthor(string): void', 'setCatalogNumber(string): void', 'setCostPrice(number): void', 'setListPrice(number): void', 'setTitle(string): void'],
        },
      ]}
    />
    <ClassNode
      name="LineItem"
      place="left-[555px] top-[479px] h-[201px] w-[262px]"
      attributes={['quantity: int']}
      operations={[
        { items: [] },
        { stereotype: 'property get', items: ['getItem(): StockItem', 'getQuantity(): int'] },
        { stereotype: 'property set', items: ['setItem(StockItem): void', 'setQuantity(int): void'] },
      ]}
    />

    <svg className="pointer-events-none absolute inset-0 h-full w-full" fill="none" stroke="#7078a0">
      <path d="M683.500 420v59M369 563.500h186M205.500 712v90M686.500 680v90M817 602.500h24.500V770" />
    </svg>

    <div className="absolute top-[330px] left-[323px] size-[18px] border border-[#8f8388] bg-gradient-to-r from-[#dfecff] to-[#bcd8f8] shadow-[2px_2px_0_#cfcccc]" />
    <p className="absolute top-[306px] left-[344px] text-[11px] leading-4 whitespace-nowrap text-[#666]">
      «enumeration» status /
      <br />
      OrderStatus: OrderStatus
    </p>
    <p className="absolute top-[425px] left-[649px] text-[11px] leading-4 text-[#666]">-item</p>
  </div>
);

const DiagramArea = () => (
  <main className="mx-[3px] flex min-w-0 flex-1 flex-col border border-[#dcdcdc]">
    <div className="flex h-[26px] shrink-0 items-center border-b border-[#dcdcdc] bg-[#efefef] text-[11px] text-[#8a8a8a]">
      <svg viewBox="0 0 10 10" className="ml-[5px] size-2.5" fill="none" stroke="#333" strokeWidth="1.800"><path d="M1 1l3.500 4L1 9M5.500 1L9 5 5.500 9" /></svg>
      <DiagramIcon className="mr-8 ml-6" />
      <span className="flex-1 whitespace-pre">Java Model With Behaviors.  Class Diagram</span>
      <div className="flex items-center gap-[17px] pr-2.5 text-[#222]">
        <button aria-label="Collapse">
          <svg viewBox="0 0 10 10" className="size-2.5" fill="none" stroke="#333" strokeWidth="1.600"><path d="M5 1L1.500 5 5 9M9 1L5.500 5 9 9" /></svg>
        </button>
        <button aria-label="Diagram list"><Triangle dir="down" /></button>
        <button aria-label="Close diagram"><CloseIcon className="size-2" /></button>
      </div>
    </div>
    <DocumentTabs />
    <div className="flex min-h-0 flex-1">
      <Canvas />
      <VerticalScroll thumb="h-[281px]" />
    </div>
    <div className="flex bg-[#efefef] pr-[17px]">
      <HorizontalScroll thumb="w-[850px]" />
    </div>
  </main>
);

/* ---------- properties panel ---------- */

type PropertyValue = string | boolean | undefined;

interface PropertySection {
  title: string;
  rows: [label: string, value?: PropertyValue, action?: boolean][];
}

const sections: PropertySection[] = [
  {
    title: 'General',
    rows: [
      ['Name', 'Java Model With Behaviors'],
      ['Type', 'Class'],
      ['Stereotype'],
      ['Author', 'Chuck Wilson'],
      ['Applied Metamodel', 'Default'],
      ['Filter to Metamodel', false],
      ['Filter to Context', false],
      ['Context Navigation', false],
    ],
  },
  {
    title: 'Version',
    rows: [['Version', '1.0'], ['Filter to Version', false], ['New to Version', false]],
  },
  {
    title: 'Appearance',
    rows: [
      ['Display as', 'Diagram'],
      ['Hand Drawn', false],
      ['Whiteboard', false],
      ['Custom Style', false],
      ['Collapse Embedded Elements', false],
      ['Dashboard Style', 'None'],
      ['Grid Style', 'Disable'],
      ['Support Collaboration', 'None'],
      ['Theme', 'Use global theme'],
    ],
  },
  {
    title: 'Show',
    rows: [
      ['Fully Scoped Object Names', true],
      ['Element Lock Status', false],
      ['Linked Document Icon', true],
      ['Collapsed Embedded Labels', false],
      ['Info Tip (Global)', false],
      ['Standard Bookmarks', true],
    ],
  },
  {
    title: 'Advanced',
    rows: [
      ['MDG Technology'],
      ['GUID', '{E35176D2-3611-421a-8C9...'],
      ['WebEA', undefined, true],
      ['Prolaborate', undefined, true],
    ],
  },
  {
    title: 'Connectors',
    rows: [['Show Relationships', true], ['Freeze Visible', false], ['Show Non-Navigable Ends', false]],
  },
];

const Checkbox = ({ id, checked }: { id: string; checked: boolean }) => (
  <span className="grid">
    <input
      id={id}
      type="checkbox"
      defaultChecked={checked}
      className="peer size-[13px] appearance-none rounded-[3px] border border-[#c4c4c4] bg-white [grid-area:1/1]"
    />
    <svg viewBox="0 0 13 13" className="pointer-events-none invisible size-[13px] [grid-area:1/1] peer-checked:visible" fill="none" stroke="#666" strokeWidth="1.500">
      <path d="M3.500 6.500l2 2.200 4-4.500" />
    </svg>
  </span>
);

const PropertyGrid = () => (
  <div className="flex min-h-0 flex-1 border-t border-l border-[#d5d5d5]">
    <div className="min-w-0 flex-1 overflow-hidden">
      <div className="grid h-[728px] auto-rows-fr grid-cols-1 font-['Liberation_Sans',sans-serif] text-[11px] text-[#555]">
        {sections.map((section) => (
          <Fragment key={section.title}>
            <div className="flex items-center gap-2 bg-[#f8f8f8] pl-1.5 font-bold text-[#444]">
              <svg viewBox="0 0 8 8" className="size-2" fill="#aaa"><path d="M8 0v8H0z" /></svg>
              {section.title}
            </div>
            {section.rows.map(([label, value, action]) => {
              const id = `${section.title}-${label}`;
              return (
                <div key={label} className="flex bg-[#f8f8f8] pl-[17px]">
                  <label
                    htmlFor={typeof value === 'boolean' ? id : undefined}
                    className={clsx('flex w-[173px] shrink-0 items-center pl-[5px]', label === 'Name' ? 'bg-[#e2e2e2]' : 'bg-[#fdfdfd]')}
                  >
                    {label}
                  </label>
                  <div className="flex min-w-0 flex-1 items-center bg-[#fdfdfd] pl-[3px]">
                    {typeof value === 'boolean' && <Checkbox id={id} checked={value} />}
                    {typeof value === 'string' && <span className="pl-0.5 whitespace-nowrap">{value}</span>}
                    {action && (
                      <button className="mr-px ml-auto h-[17px] w-[18px] border border-[#d5d5d5] bg-[#f0f0f0] text-[10px] leading-3">...</button>
                    )}
                  </div>
                </div>
              );
            })}
          </Fragment>
        ))}
      </div>
    </div>
    <VerticalScroll thumb="h-[567px]" />
  </div>
);

const PropertiesPanel = () => (
  <aside className="flex w-[364px] shrink-0 flex-col bg-[#f8f8f8]">
    <PanelHeader title="Properties" />
    <div className="flex h-[23px] shrink-0 items-center gap-3 bg-[#fafafa] pb-0.5 pl-[7px]">
      <button aria-label="Save">
        <svg viewBox="0 0 14 14" className="size-3.5" fill="none" stroke="#a3bfdc" strokeWidth="2"><path d="M1 1h12v12H1zM4 1v5h6V1M5 13V9.500h4.500V13" /></svg>
      </button>
      <button aria-label="Options" className="flex items-center gap-1.5 text-[#777]">
        <MenuLines className="h-[11px] w-3.5" /> <Triangle dir="down" className="size-1.5" />
      </button>
      <button aria-label="Details">
        <svg viewBox="0 0 16 15" className="h-[15px] w-4">
          <rect x=".75" y="2.500" width="14" height="11.500" fill="#fff" stroke="#5b88bd" strokeWidth="1.400" />
          <path d="M0 3h15M5.500 3v11M1 8h14" stroke="#5b88bd" strokeWidth="1.500" />
          <path d="M5 2h5l4-1v6l-4 1-4-2z" fill="#a9a23a" />
        </svg>
      </button>
      <button aria-label="Run" className="text-[#c9c6ee]"><Triangle dir="right" className="size-3.5" /></button>
    </div>
    <div className="pb-1.5">
      <PanelTabs tabs={['Diagram', 'Compartments', 'Objects ZOrder']} notch="w-[21px]" />
    </div>
    <PropertyGrid />
  </aside>
);

/* ---------- status bar ---------- */

const StatusBar = () => (
  <footer className="flex h-[23px] shrink-0 items-center justify-between border-t border-[#dcdcdc] bg-[#f8f8f8] pr-2 pl-0.5 text-[11px] text-[#555]">
    <div className="flex gap-2">
      <span>Class Diagram:Java Model With Behaviors:</span>
      <span className="whitespace-pre">created: 11-05-2005  modified: 10-03-2017 09:00:34</span>
      <span>118%</span>
      <span>998 x 675</span>
    </div>
    <div className="flex items-center">
      <span>All Perspectives</span>
      <div className="mx-[21px] h-3.5 w-px bg-[#ccc]" />
      <button aria-label="Zoom out" className="text-[#999]">
        <svg viewBox="0 0 10 10" className="size-2.5" stroke="currentColor"><path d="M0 5.500h9" /></svg>
      </button>
      <input
        type="range"
        aria-label="Zoom"
        defaultValue={0}
        className="mr-2.5 ml-2 h-4 w-[87px] appearance-none bg-transparent [&::-webkit-slider-runnable-track]:h-px [&::-webkit-slider-runnable-track]:bg-[#ccc] [&::-webkit-slider-thumb]:-mt-2 [&::-webkit-slider-thumb]:h-4 [&::-webkit-slider-thumb]:w-1 [&::-webkit-slider-thumb]:appearance-none [&::-webkit-slider-thumb]:border [&::-webkit-slider-thumb]:border-[#bbb] [&::-webkit-slider-thumb]:bg-white"
      />
      <button aria-label="Zoom in" className="mr-2.5 text-[#999]">
        <svg viewBox="0 0 10 10" className="size-2.5" stroke="currentColor"><path d="M0 5.500h9M4.500 1v9" /></svg>
      </button>
      <div className="flex gap-3.5 text-[#b9b9b9]">
        <span>CAP</span>
        <span className="text-[#555]">NUM</span>
        <span>SCRL</span>
        <span>CLOUD</span>
      </div>
    </div>
  </footer>
);

const App = () => (
  <div className="flex h-screen flex-col overflow-hidden bg-[#efefef] font-['Noto_Sans','Open_Sans',sans-serif]">
    <TitleBar />
    <MenuBar />
    <Ribbon />
    <Breadcrumb />
    <div className="flex min-h-0 flex-1">
      <BrowserPanel />
      <DiagramArea />
      <PropertiesPanel />
    </div>
    <StatusBar />
  </div>
);

export default App;
